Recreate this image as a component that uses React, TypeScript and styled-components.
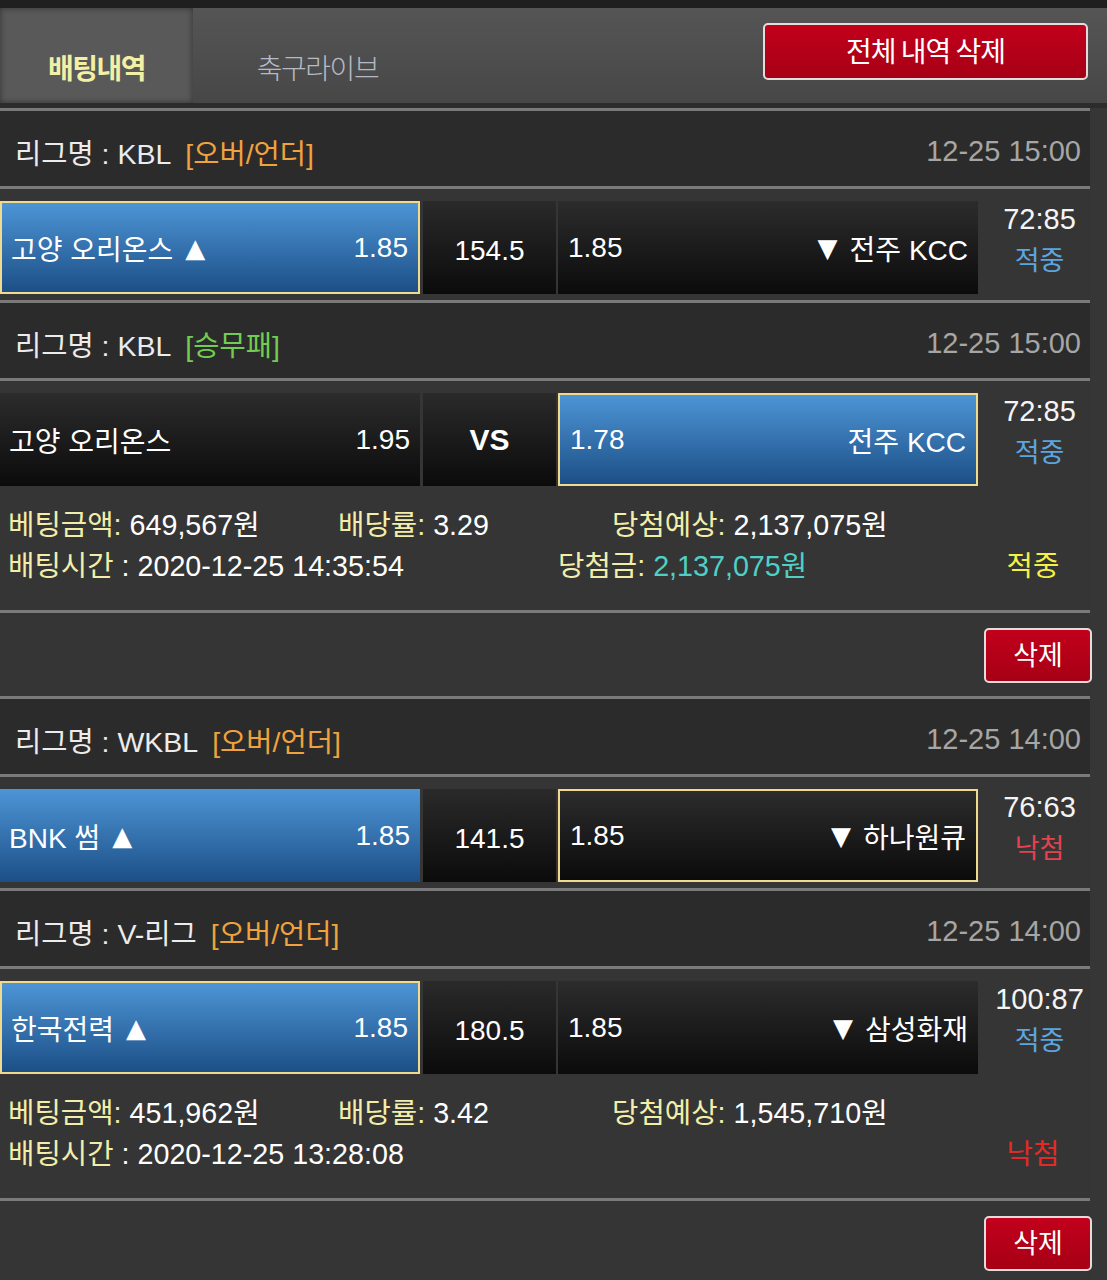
import React from 'react';
import styled, { createGlobalStyle } from 'styled-components';

const GlobalStyle = createGlobalStyle`
    body {
        margin: 0;
        background: #363636;
        font-family: "Liberation Sans", "Noto Sans CJK KR", sans-serif;
        color: #eeeeee;
    }
`;

type Side = 'left' | 'right';

interface Team {
    name: string;
    odds: string;
    win?: boolean;
    picked?: boolean;
    arrow?: boolean;
}

interface Game {
    league: string;
    type: string;
    typeColor: string;
    time: string;
    home: Team;
    away: Team;
    center: string;
    score: string;
    result: 'hit' | 'miss';
}

interface Slip {
    games: Game[];
    amount: string;
    rate: string;
    expected: string;
    betTime: string;
    prize?: string;
    status: 'hit' | 'miss';
}

const slips: Slip[] = [
    {
        games: [
            {
                league: 'KBL', type: '[오버/언더]', typeColor: '#f0a23c', time: '12-25 15:00',
                home: { name: '고양 오리온스', odds: '1.85', win: true, picked: true, arrow: true },
                away: { name: '전주 KCC', odds: '1.85', arrow: true },
                center: '154.5', score: '72:85', result: 'hit',
            },
            {
                league: 'KBL', type: '[승무패]', typeColor: '#72cc52', time: '12-25 15:00',
                home: { name: '고양 오리온스', odds: '1.95' },
                away: { name: '전주 KCC', odds: '1.78', win: true, picked: true },
                center: 'VS', score: '72:85', result: 'hit',
            },
        ],
        amount: '649,567원', rate: '3.29', expected: '2,137,075원',
        betTime: '2020-12-25 14:35:54', prize: '2,137,075원', status: 'hit',
    },
    {
        games: [
            {
                league: 'WKBL', type: '[오버/언더]', typeColor: '#f0a23c', time: '12-25 14:00',
                home: { name: 'BNK 썸', odds: '1.85', win: true, arrow: true },
                away: { name: '하나원큐', odds: '1.85', picked: true, arrow: true },
                center: '141.5', score: '76:63', result: 'miss',
            },
            {
                league: 'V-리그', type: '[오버/언더]', typeColor: '#f0a23c', time: '12-25 14:00',
                home: { name: '한국전력', odds: '1.85', win: true, picked: true, arrow: true },
                away: { name: '삼성화재', odds: '1.85', arrow: true },
                center: '180.5', score: '100:87', result: 'hit',
            },
        ],
        amount: '451,962원', rate: '3.42', expected: '1,545,710원',
        betTime: '2020-12-25 13:28:08', status: 'miss',
    },
];

export default function App() {
    return (
        <Page>
            <GlobalStyle />
            <TopStrip />
            <TabBar>
                <Tab $active>배팅내역</Tab>
                <Tab>축구라이브</Tab>
                <DeleteAllButton>전체 내역 삭제</DeleteAllButton>
            </TabBar>

            <Main>
                {slips.map((slip, i) => (
                    <SlipBlock key={i}>
                        {slip.games.map((g, j) => (
                            <React.Fragment key={j}>
                                <GameHeader>
                                    <LeagueLabel>
                                        리그명 : {g.league}
                                        <BetType $color={g.typeColor}>{g.type}</BetType>
                                    </LeagueLabel>
                                    <GameTime>{g.time}</GameTime>
                                </GameHeader>
                                <GameRow>
                                    <TeamCell $side='left' $win={g.home.win} $picked={g.home.picked}>
                                        <span>
                                            {g.home.name}
                                            {g.home.arrow && <Arrow $side='left'>▲</Arrow>}
                                        </span>
                                        <span>{g.home.odds}</span>
                                    </TeamCell>
                                    <CenterCell $bold={g.center === 'VS'}>{g.center}</CenterCell>
                                    <TeamCell $side='right' $win={g.away.win} $picked={g.away.picked}>
                                        <span>{g.away.odds}</span>
                                        <span>
                                            {g.away.arrow && <Arrow $side='right'>▼</Arrow>}
                                            {g.away.name}
                                        </span>
                                    </TeamCell>
                                    <ResultCol>
                                        <Score>{g.score}</Score>
                                        <ResultText $hit={g.result === 'hit'}>
                                            {g.result === 'hit' ? '적중' : '낙첨'}
                                        </ResultText>
                                    </ResultCol>
                                </GameRow>
                            </React.Fragment>
                        ))}

                        <InfoArea>
                            <InfoLine>
                                <InfoItem $w={330}><Label>베팅금액:</Label> {slip.amount}</InfoItem>
                                <InfoItem $w={274}><Label>배당률:</Label> {slip.rate}</InfoItem>
                                <InfoItem><Label>당첨예상:</Label> {slip.expected}</InfoItem>
                            </InfoLine>
                            <InfoLine>
                                <InfoItem $w={550}><Label>배팅시간</Label> : {slip.betTime}</InfoItem>
                                <InfoItem $grow>
                                    {slip.prize && <><Label>당첨금:</Label> <Prize>{slip.prize}</Prize></>}
                                </InfoItem>
                                <StatusText $hit={slip.status === 'hit'}>
                                    {slip.status === 'hit' ? '적중' : '낙첨'}
                                </StatusText>
                            </InfoLine>
                        </InfoArea>

                        <DeleteBar>
                            <DeleteButton>삭제</DeleteButton>
                        </DeleteBar>
                    </SlipBlock>
                ))}
            </Main>
        </Page>
    );
}

const Page = styled.div`
    min-height: 1280px;
    background: #363636;
`;

const TopStrip = styled.div`
    height: 8px;
    background: #1f1f1f;
`;

const TabBar = styled.div`
    display: flex;
    align-items: stretch;
    height: 95px;
    background: linear-gradient(#555555, #474747);
    border-bottom: 5px solid #2c2c2c;
`;

const Tab = styled.div<{ $active?: boolean }>`
    display: flex;
    align-items: flex-end;
    justify-content: center;
    box-sizing: border-box;
    width: ${p => p.$active ? '193px' : '245px'};
    padding-bottom: 16px;
    margin-right: ${p => p.$active ? '2px' : '0'};
    font-family: "Noto Sans CJK KR", sans-serif;
    font-size: 28px;
    font-weight: ${p => p.$active ? 700 : 300};
    letter-spacing: -1.5px;
    color: ${p => p.$active ? '#f2f0a4' : '#b6bac6'};
    background: ${p => p.$active ? '#595959' : 'transparent'};
    box-shadow: ${p => p.$active ? 'inset 0 0 6px rgba(0,0,0,0.45)' : 'none'};
`;

const DeleteAllButton = styled.button`
    align-self: flex-start;
    margin: 15px 19px 0 auto;
    width: 325px;
    height: 57px;
    border: 2px solid #e4dcdc;
    border-radius: 5px;
    background: linear-gradient(#c2001c, #a60015);
    color: #ffffff;
    font-family: "Noto Sans CJK KR", sans-serif;
    font-size: 28px;
    letter-spacing: -1px;
    padding: 0 0 4px;
`;

const Main = styled.div`
    width: 1090px;
`;

const SlipBlock = styled.div``;

const GameHeader = styled.div`
    display: flex;
    align-items: center;
    justify-content: space-between;
    box-sizing: border-box;
    height: 81px;
    padding: 6px 9px 0 15px;
    background: #2b2b2b;
    border-top: 3px solid #7a7a7a;
    border-bottom: 3px solid #7a7a7a;
    font-size: 29px;
`;

const LeagueLabel = styled.div`
    font-size: 28.5px;
    color: #ececec;
`;

const BetType = styled.span<{ $color: string }>`
    margin-left: 14px;
    color: ${p => p.$color};
`;

const GameTime = styled.div`
    color: #a6a6a6;
`;

const GameRow = styled.div`
    display: flex;
    gap: 3px;
    height: 93px;
    padding: 12px 0 6px;
    background: #353535;
`;

const TeamCell = styled.div<{ $side: Side; $win?: boolean; $picked?: boolean }>`
    display: flex;
    align-items: center;
    justify-content: space-between;
    box-sizing: border-box;
    width: 420px;
    padding-left: ${p => p.$side === 'left' ? '9px' : '10px'};
    padding-right: 10px;
    margin-left: ${p => p.$side === 'right' ? '-1px' : '0'};
    font-size: 28px;
    color: #ffffff;
    background: ${p => p.$win
        ? 'linear-gradient(#4d95d6, #1c4f86)'
        : 'linear-gradient(#2c2c2c, #0b0b0b)'};
    border: ${p => p.$picked ? '2px solid #f0da8e' : 'none'};
`;

const Arrow = styled.span<{ $side: Side }>`
    display: inline-block;
    position: relative;
    top: -3px;
    font-family: "DejaVu Sans", sans-serif;
    font-size: 26px;
    margin: ${p => p.$side === 'left' ? '0 0 0 12px' : '0 12px 0 0'};
`;

const CenterCell = styled.div<{ $bold?: boolean }>`
    display: flex;
    align-items: center;
    justify-content: center;
    width: 133px;
    padding-top: ${p => p.$bold ? '0' : '6px'};
    font-size: ${p => p.$bold ? '30px' : '28px'};
    font-weight: ${p => p.$bold ? 700 : 400};
    color: #ffffff;
    background: linear-gradient(#2a2a2a, #0b0b0b);
`;

const ResultCol = styled.div`
    display: flex;
    flex-direction: column;
    align-items: center;
    flex: 1;
    padding-left: 10px;
    margin-left: -2px;
`;

const Score = styled.div`
    font-size: 29px;
    color: #f4f4f4;
    line-height: 36px;
`;

const ResultText = styled.div<{ $hit: boolean }>`
    font-size: 27px;
    line-height: 48px;
    color: ${p => p.$hit ? '#5ca6e0' : '#e6414f'};
`;

const InfoArea = styled.div`
    height: 118px;
    box-sizing: border-box;
    padding: 10px 0 0 8px;
    background: #353535;
`;

const InfoLine = styled.div`
    display: flex;
    align-items: center;
    height: 41px;
    font-size: 28.7px;
    color: #ffffff;
`;

const InfoItem = styled.div<{ $w?: number; $grow?: boolean }>`
    width: ${p => p.$w ? `${p.$w}px` : 'auto'};
    flex: ${p => p.$grow ? 1 : 'none'};
    white-space: nowrap;
`;

const Label = styled.span`
    color: #f2eeaa;
`;

const Prize = styled.span`
    color: #4fd0c6;
`;

const StatusText = styled.div<{ $hit: boolean }>`
    width: 110px;
    margin-right: 2px;
    text-align: center;
    color: ${p => p.$hit ? '#f4f046' : '#e42a26'};
`;

const DeleteBar = styled.div`
    display: flex;
    justify-content: flex-end;
    height: 86px;
    box-sizing: border-box;
    padding-top: 15px;
    border-top: 3px solid #7a7a7a;
    background: #353535;
`;

const DeleteButton = styled.button`
    width: 108px;
    height: 55px;
    margin-right: -2px;
    border: 2px solid #e4dcdc;
    border-radius: 5px;
    background: linear-gradient(#c2001c, #a60015);
    color: #ffffff;
    font-family: "Noto Sans CJK KR", sans-serif;
    font-size: 27px;
    padding: 0 0 4px;
`;
